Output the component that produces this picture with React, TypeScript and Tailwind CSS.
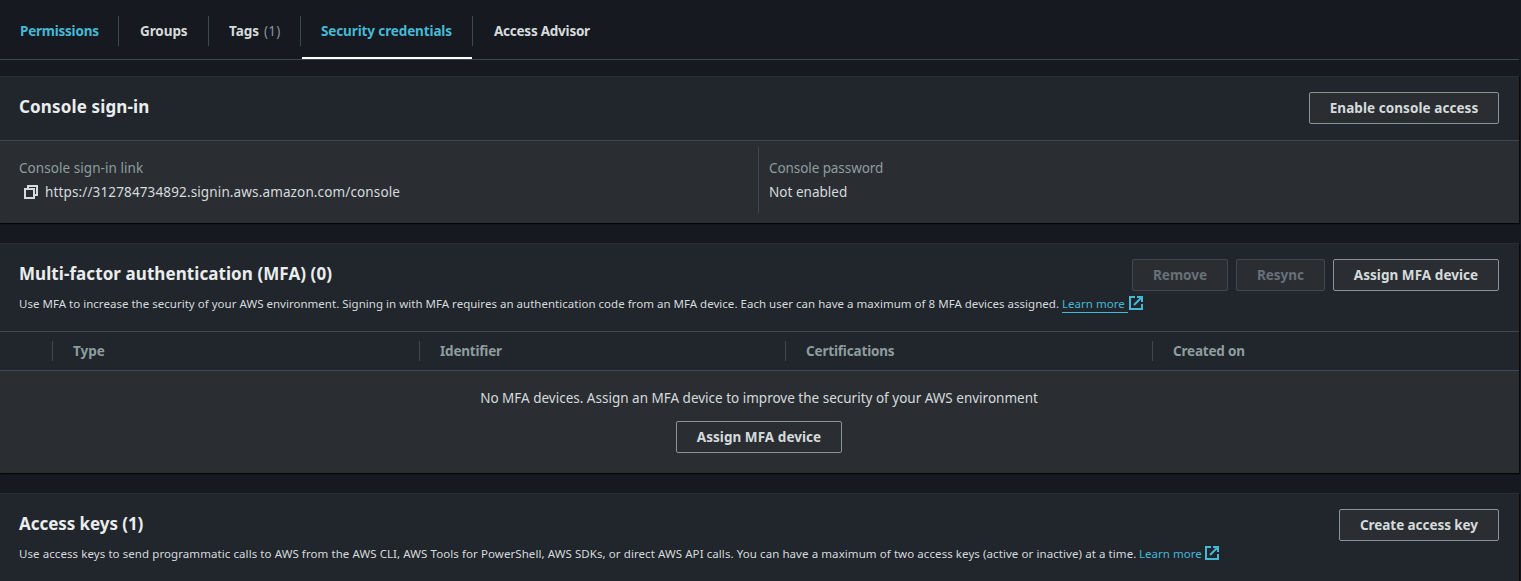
import type { ReactNode } from "react";

function CopyIcon() {
  return (
    <svg className="shrink-0" width="16" height="16" viewBox="0 0 16 16" fill="none" stroke="#d5dbdb" strokeWidth="2">
      <path d="M2 5h9v9H2z" />
      <path d="M5 5V2h9v9h-3" />
    </svg>
  );
}

function ExternalIcon() {
  return (
    <svg className="shrink-0" width="16" height="16" viewBox="0 0 16 16" fill="none" stroke="#44b9d6" strokeWidth="2">
      <path d="M7 2H2v12h12V9" />
      <path d="M9 2h5v5" />
      <path d="M6 10l7.5-7.5" />
    </svg>
  );
}

function Button({ children, disabled = false, className }: { children: ReactNode; disabled?: boolean; className: string }) {
  const tone = disabled ? "border-[#414750] text-[#687078]" : "border-[#879596] text-[#d5dbdb]";
  return (
    <button
      type="button"
      disabled={disabled}
      className={`flex h-8 items-center justify-center whitespace-nowrap rounded-[2px] border bg-[#2a2e33] text-[13.5px] font-bold leading-5 ${tone} ${className}`}
    >
      {children}
    </button>
  );
}

function Panel({ children, className }: { children: ReactNode; className: string }) {
  return (
    <section className={`border-t border-[#2a2e33] bg-[#21252c] shadow-[0_1px_1px_0_rgba(0,0,0,0.5),1px_1px_1px_0_rgba(0,0,0,0.5)] ${className}`}>
      {children}
    </section>
  );
}

const heading = "mt-1 whitespace-nowrap text-[17px] font-bold leading-[22px] text-[#eaeded]";
const description = "mt-px flex h-[22px] items-center whitespace-nowrap text-[11.5px] leading-[18px]";

function Tab({ children, className }: { children: ReactNode; className: string }) {
  return (
    <div className={`flex h-[59px] items-center whitespace-nowrap leading-5 ${className}`}>{children}</div>
  );
}

function TabDivider() {
  return <div className="mt-4 h-[30px] w-px bg-[#414750]" />;
}

function Column({ children, className }: { children: ReactNode; className: string }) {
  return (
    <div className={`h-5 border-l border-[#414750] pl-5 leading-5 ${className}`}>{children}</div>
  );
}

export default function App() {
  return (
    <div className="h-[581px] w-full overflow-hidden bg-[#16191f] pr-0.5 font-['Noto_Sans','Open_Sans',sans-serif] text-[13.5px] text-[#d5dbdb]">
      <nav className="flex h-[60px] border-b border-[#414750] font-bold">
        <Tab className="w-[118px] pl-5 pt-[3px] tracking-[-0.23px] text-[#44b9d6]">Permissions</Tab>
        <TabDivider />
        <Tab className="w-[89px] pl-[21px] pt-[3px] tracking-[-0.09px]">Groups</Tab>
        <TabDivider />
        <Tab className="w-[91px] pl-5 pt-[3px] tracking-[-0.03px]">
          Tags<span className="ml-[5px] font-normal tracking-[0.2px] text-[#879596]">(1)</span>
        </Tab>
        <TabDivider />
        <Tab className="ml-px w-[170px] border-b-2 border-white pl-[19px] pt-[5px] tracking-[-0.12px] text-[#44b9d6]">
          Security credentials
        </Tab>
        <TabDivider />
        <Tab className="pl-[21px] pt-[3px] tracking-[-0.24px]">Access Advisor</Tab>
      </nav>

      <main className="mt-4 flex flex-col gap-5">
        <Panel className="h-[147px]">
          <header className="flex h-16 items-start justify-between border-b border-[#414750] pl-[19px] pr-5 pt-[15px]">
            <h2 className={`tracking-[0.14px] ${heading}`}>Console sign-in</h2>
            <Button className="w-[190px] tracking-[0.064px]">Enable console access</Button>
          </header>
          <div className="flex h-[82px] bg-[#2a2e33] pt-[6px]">
            <div className="h-[66px] w-[758px] pl-[19px] pt-[10px]">
              <div className="leading-[22px] tracking-[0.06px] text-[#8e9d9e]">Console sign-in link</div>
              <div className="mt-0.5 flex h-[22px] items-center pl-1">
                <CopyIcon />
                <span className="ml-1.5 leading-[22px] tracking-[0.135px]">https://312784734892.signin.aws.amazon.com/console</span>
              </div>
            </div>
            <div className="h-[66px] border-l border-[#414750] pl-[10px] pt-[10px]">
              <div className="leading-[22px] tracking-[-0.08px] text-[#8e9d9e]">Console password</div>
              <div className="mt-0.5 leading-[22px] tracking-[0.02px]">Not enabled</div>
            </div>
          </div>
        </Panel>

        <Panel className="h-[230px]">
          <header className="h-[87px] pl-[19px] pr-5 pt-[15px]">
            <div className="flex h-8 items-start justify-between">
              <h2 className={`tracking-[0.07px] ${heading}`}>Multi-factor authentication (MFA) (0)</h2>
              <div className="flex gap-2">
                <Button disabled className="w-24">Remove</Button>
                <Button disabled className="w-[89px]">Resync</Button>
                <Button className="w-[166px] tracking-[0.055px]">Assign MFA device</Button>
              </div>
            </div>
            <div className={description}>
              <p className="w-[1043px] pt-0.5 tracking-[0.02px]">
                Use MFA to increase the security of your AWS environment. Signing in with MFA requires an authentication code from an MFA device. Each user can have a maximum of 8 MFA devices assigned.
              </p>
              <a className="mt-0.5 h-[18px] w-[66px] border-b border-[#44b9d6] tracking-[0.03px] text-[#44b9d6]">Learn more</a>
              <ExternalIcon />
            </div>
          </header>
          <div className="flex h-10 items-center border-y border-[#414750] pl-[52px] font-bold text-[#8e9d9e]">
            <Column className="w-[367px]">Type</Column>
            <Column className="w-[366px] tracking-[-0.2px]">Identifier</Column>
            <Column className="w-[367px] tracking-[-0.17px]">Certifications</Column>
            <Column className="tracking-[-0.2px]">Created on</Column>
          </div>
          <div className="flex h-[102px] flex-col items-center bg-[#2a2e33] pr-px pt-4">
            <p className="leading-[22px]">No MFA devices. Assign an MFA device to improve the security of your AWS environment</p>
            <Button className="mt-3 w-[166px] tracking-[0.055px]">Assign MFA device</Button>
          </div>
        </Panel>

        <Panel className="h-[120px]">
          <header className="pl-[19px] pr-5 pt-[15px]">
            <div className="flex h-8 items-start justify-between">
              <h2 className={`tracking-[-0.06px] ${heading}`}>Access keys (1)</h2>
              <Button className="w-40 tracking-[-0.06px]">Create access key</Button>
            </div>
            <div className={description}>
              <p className="w-[1120px] pt-0.5 tracking-[0.078px]">
                Use access keys to send programmatic calls to AWS from the AWS CLI, AWS Tools for PowerShell, AWS SDKs, or direct AWS API calls. You can have a maximum of two access keys (active or inactive) at a time.
              </p>
              <a className="w-[65px] pt-0.5 tracking-[0.03px] text-[#44b9d6]">Learn more</a>
              <ExternalIcon />
            </div>
          </header>
        </Panel>
      </main>
    </div>
  );
}
